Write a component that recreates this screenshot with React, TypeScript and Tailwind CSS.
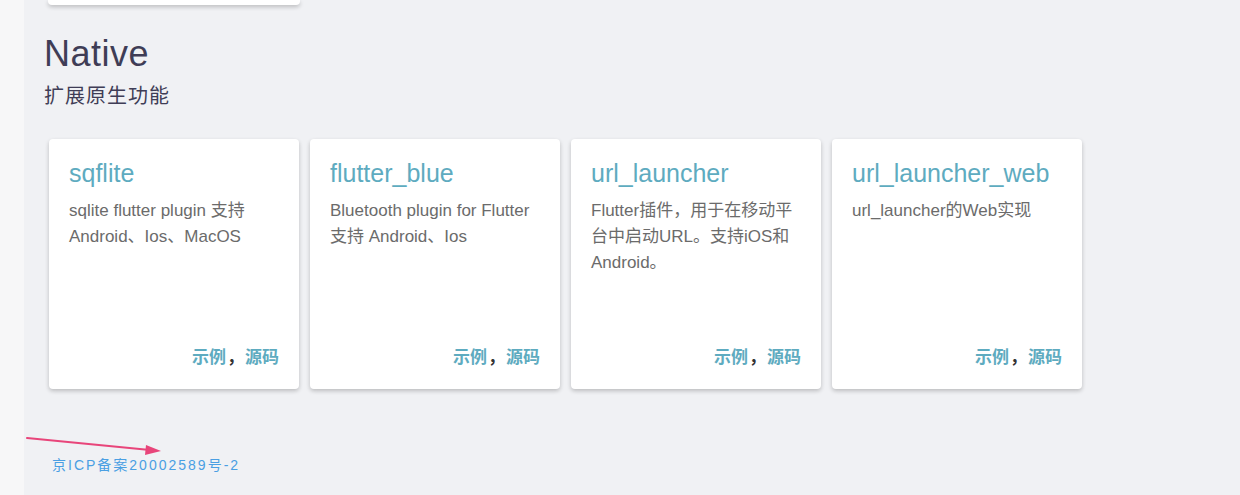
import React from 'react'

type Plugin = { name: string; desc: string }

const PLUGINS: Plugin[] = [
  { name: 'sqflite', desc: 'sqlite flutter plugin 支持 Android、Ios、MacOS' },
  { name: 'flutter_blue', desc: 'Bluetooth plugin for Flutter 支持 Android、Ios' },
  { name: 'url_launcher', desc: 'Flutter插件，用于在移动平台中启动URL。支持iOS和Android。' },
  { name: 'url_launcher_web', desc: 'url_launcher的Web实现' },
]

const FONT = 'font-["Liberation_Sans","Noto_Sans_CJK_SC",sans-serif]'

function PluginCard({ p }: { p: Plugin }) {
  return (
    <div className="flex h-[250px] w-[250px] flex-col rounded-[4px] bg-white px-[20px] pb-[20px] pt-[17px] shadow-[0_2px_4px_rgba(0,0,0,0.22)]">
      <div className="text-[25px] leading-[34px] text-[#5eabc0]">{p.name}</div>
      <p className="mt-[8px] text-[17px] leading-[26px] text-[#6b6b6b]">{p.desc}</p>
      <div className="mt-auto text-right text-[17px] font-semibold leading-[22px] text-[#5eabc0]">
        <a>示例</a>
        <span className="mx-[1px] text-[#333]">，</span>
        <a>源码</a>
      </div>
    </div>
  )
}

export default function App() {
  return (
    <div className={`relative flex h-[495px] w-full overflow-hidden ${FONT}`}>
      <aside className="w-[24px] shrink-0 bg-[#f7f7f8]" />
      <main className="flex-1 bg-[#f0f1f4] pl-[20px]">
        {/* tail of previous section card */}
        <div className="ml-[4px] h-[5px] w-[252px] rounded-b-[4px] bg-white shadow-[0_2px_4px_rgba(0,0,0,0.22)]" />

        <h2 className="mt-[29px] text-[36px] leading-[40px] tracking-[0.5px] text-[#3f3d56]">Native</h2>
        <p className="mt-[10px] text-[20px] leading-[24px] tracking-[1px] text-[#3f3d56]">扩展原生功能</p>

        <div className="mt-[31px] flex gap-[11px] pl-[5px]">
          {PLUGINS.map((p) => (
            <PluginCard key={p.name} p={p} />
          ))}
        </div>

        <div className="mt-[66px] pl-[8px] text-[14px] leading-[20px] tracking-[2px] text-[#4a9fe3]">
          京ICP备案20002589号-2
        </div>
      </main>

      {/* annotation arrow */}
      <svg className="absolute left-0 top-0" width="200" height="495" viewBox="0 0 200 495">
        <line x1="27" y1="438" x2="150" y2="450" stroke="#e8457a" strokeWidth="2" strokeLinecap="round" />
        <polygon points="161,451 146,445 145,455" fill="#e8457a" />
      </svg>
    </div>
  )
}
